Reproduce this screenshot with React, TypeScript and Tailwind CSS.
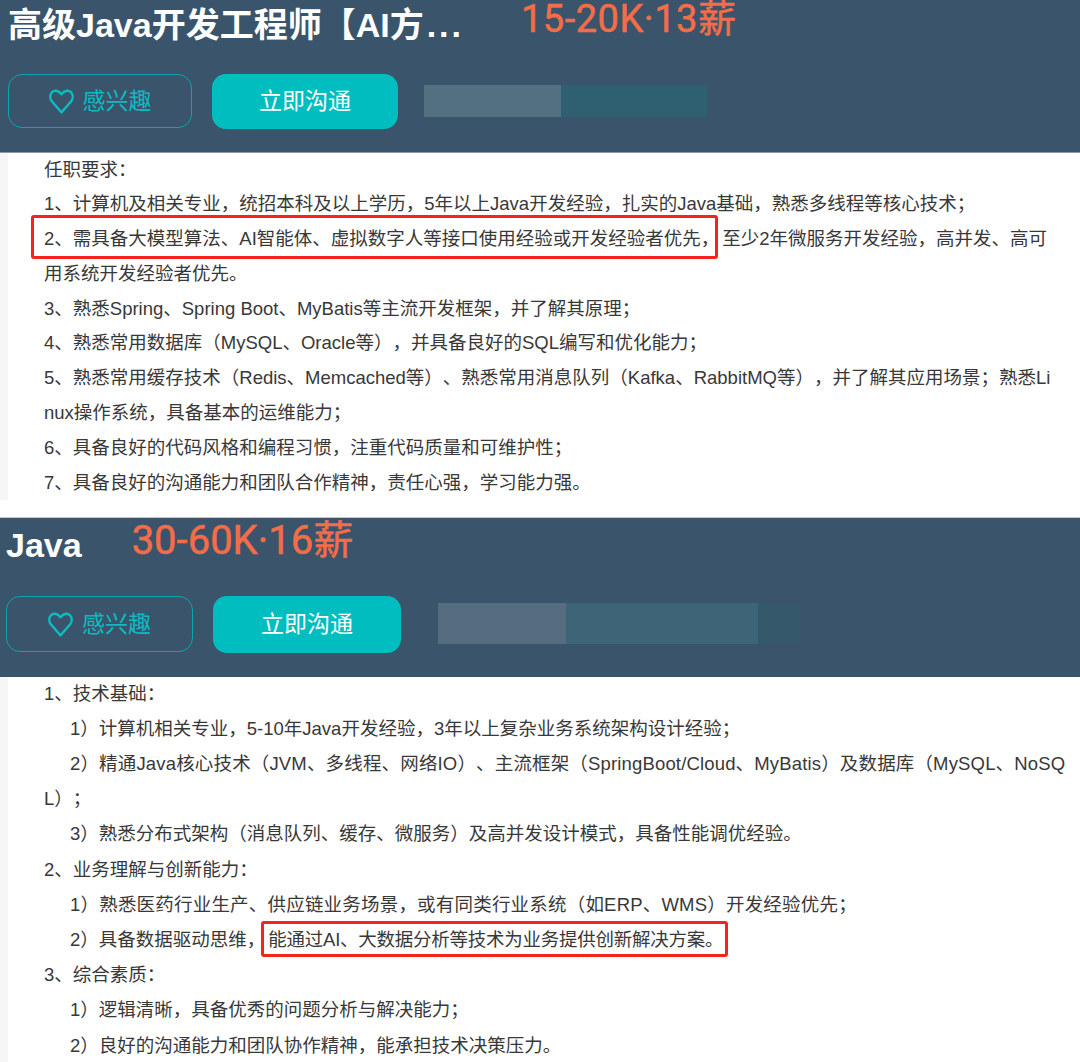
const FONT = "[font-family:'Liberation_Sans','Noto_Sans_CJK_SC',sans-serif] [text-spacing-trim:space-all]";

const Heart = ({ className }: { className: string }) => (
  <svg className={className} viewBox="0 0 26 24" fill="none" stroke="currentColor" strokeWidth="2.4" strokeLinejoin="round" preserveAspectRatio="none">
    <path d="M13 22.5 3 11.8C.6 9.2.8 5.4 3 3.200c2.500-2.500 6.800-2.200 10 1.800 3.200-4 7.500-4.300 10-1.800 2.200 2.200 2.400 6 0 8.600L13 22.500Z" />
  </svg>
);

const RedBox = ({ children, className }: { children: React.ReactNode; className: string }) => (
  <span className="relative">
    <span className={"absolute border-[3px] border-[#f5231c] rounded-[3px] " + className} />
    {children}
  </span>
);

export default function App() {
  return (
    <div className={"w-[1080px] h-[1062px] overflow-hidden bg-white text-[#383838] " + FONT}>
      {/* first job */}
      <div className="h-[153px] bg-[#3a546b] pl-2 border-b border-[#8b9aa8]">
        <div className="flex h-[74px]">
          <h1 className="text-[34px] leading-[50px] font-bold text-white whitespace-nowrap">
            高级Java开发工程师【AI方<span className="ml-[3px] tracking-[3px]">...</span>
          </h1>
          <div className="ml-[57px] mt-[1px] text-[#f56d48] text-[38px] leading-[36px] tracking-[0.5px] [-webkit-text-stroke:0.5px_#f56d48] font-['Roboto','Noto_Sans_CJK_SC',sans-serif] whitespace-nowrap">15-20K·13薪</div>
        </div>
        <div className="flex">
          <button className="w-[184px] h-[54px] rounded-[14px] border border-[#0aa6ad] text-[#0bbcc0] flex items-center justify-center gap-[9px] text-[23px]">
            <Heart className="w-[25px] h-[25px]" />
            感兴趣
          </button>
          <button className="ml-[20px] w-[186px] h-[55px] rounded-[14px] bg-[#00bdc0] text-white text-[23px]">立即沟通</button>
          <div className="ml-[26px] mt-[11px] flex h-[32px]">
            <div className="w-[137px] bg-[#52707f]" />
            <div className="w-[146px] bg-[#2f6071]" />
          </div>
        </div>
      </div>
      <div className="flow-root h-[347px] border-l-[8px] border-[#f6f6f8] pl-[36px] text-[18.5px] leading-[34.8px] whitespace-nowrap">
        <div className="-mt-[0.5px]">
          <p>任职要求：</p>
          <p>1、计算机及相关专业，统招本科及以上学历，5年以上Java开发经验，扎实的Java基础，熟悉多线程等核心技术；</p>
          <p>
            <RedBox className="-left-[13px] -top-[13px] right-[1px] -bottom-[10px]">2、需具备大模型算法、AI智能体、虚拟数字人等接口使用经验或开发经验者优先，</RedBox>
            <span className="ml-[3px]">至少2年微服务开发经验，高并发、高可</span>
          </p>
          <p>用系统开发经验者优先。</p>
          <p>3、熟悉Spring、Spring Boot、MyBatis等主流开发框架，并了解其原理；</p>
          <p>4、熟悉常用数据库（MySQL、Oracle等），并具备良好的SQL编写和优化能力；</p>
          <p>5、熟悉常用缓存技术（Redis、Memcached等）、熟悉常用消息队列（Kafka、RabbitMQ等），并了解其应用场景；熟悉Li</p>
          <p>nux操作系统，具备基本的运维能力；</p>
          <p>6、具备良好的代码风格和编程习惯，注重代码质量和可维护性；</p>
          <p>7、具备良好的沟通能力和团队合作精神，责任心强，学习能力强。</p>
        </div>
      </div>
      <div className="h-[17px]" />
      {/* second job */}
      <div className="h-[160px] bg-[#3a546b] pl-[6px] border-t border-[#c4c9ce]">
        <div className="flex h-[78px]">
          <h1 className="text-[34px] leading-[50px] mt-[2px] font-bold text-white">Java</h1>
          <div className="ml-[50px] mt-[3px] text-[#f56d48] text-[40px] leading-[40px] [-webkit-text-stroke:0.5px_#f56d48] font-['Roboto','Noto_Sans_CJK_SC',sans-serif] whitespace-nowrap">30-60K·16薪</div>
        </div>
        <div className="flex">
          <button className="w-[187px] h-[56px] rounded-[14px] border border-[#0aa6ad] text-[#0bbcc0] flex items-center justify-center gap-[9px] text-[23px]">
            <Heart className="w-[25px] h-[25px]" />
            感兴趣
          </button>
          <button className="ml-[20px] w-[188px] h-[57px] rounded-[14px] bg-[#00bdc0] text-white text-[23px]">立即沟通</button>
          <div className="ml-[37px] mt-[7px] flex h-[41px]">
            <div className="w-[128px] bg-[#566d80]" />
            <div className="w-[192px] bg-[#3e6577]" />
            <div className="w-[41px] bg-[#36586b]" />
          </div>
        </div>
      </div>
      <div className="flow-root h-[385px] border-l-[8px] border-[#f6f6f8] pl-[36px] text-[18.5px] leading-[35.2px] whitespace-nowrap">
        <div className="-mt-[1.5px]">
          <p>1、技术基础：</p>
          <p className="pl-[26px]">1）计算机相关专业，5-10年Java开发经验，3年以上复杂业务系统架构设计经验；</p>
          <p className="pl-[26px] tracking-[0.16px]">2）精通Java核心技术（JVM、多线程、网络IO）、主流框架（SpringBoot/Cloud、MyBatis）及数据库（MySQL、NoSQ</p>
          <p>L）；</p>
          <p className="pl-[26px]">3）熟悉分布式架构（消息队列、缓存、微服务）及高并发设计模式，具备性能调优经验。</p>
          <p>2、业务理解与创新能力：</p>
          <p className="pl-[26px] tracking-[0.2px]">1）熟悉医药行业生产、供应链业务场景，或有同类行业系统（如ERP、WMS）开发经验优先；</p>
          <p className="pl-[26px]">
            2）具备数据驱动思维，
            <span className="ml-[3px] tracking-[-0.25px]">
              <RedBox className="-left-[7px] -top-[8px] -right-[5px] -bottom-[7px]">能通过AI、大数据分析等技术为业务提供创新解决方案。</RedBox>
            </span>
          </p>
          <p>3、综合素质：</p>
          <p className="pl-[26px]">1）逻辑清晰，具备优秀的问题分析与解决能力；</p>
          <p className="pl-[26px]">2）良好的沟通能力和团队协作精神，能承担技术决策压力。</p>
        </div>
      </div>
    </div>
  );
}
